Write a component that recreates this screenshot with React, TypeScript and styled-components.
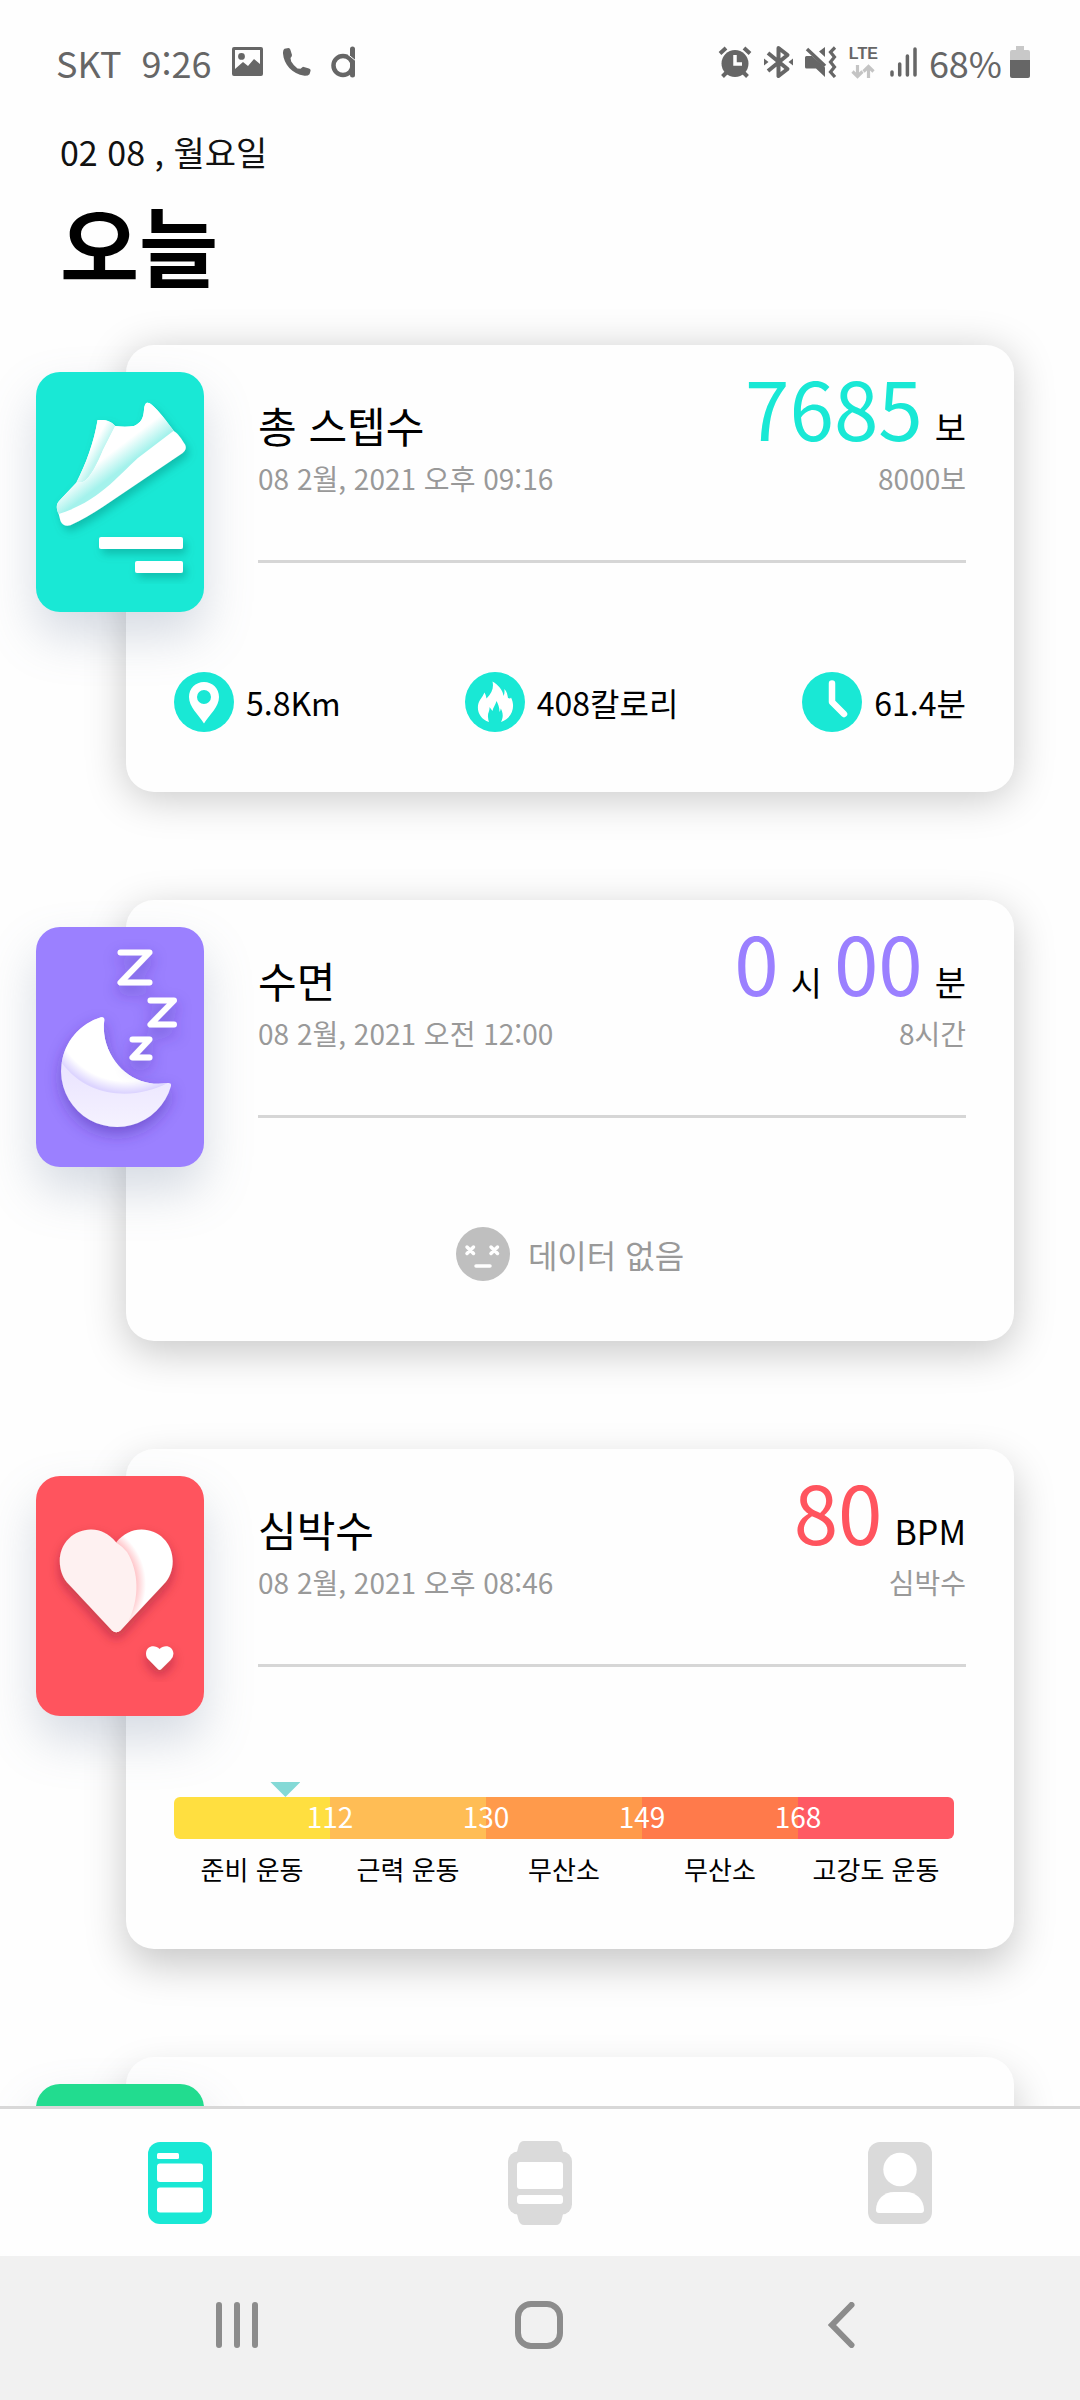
import React from 'react';
import styled, { createGlobalStyle } from 'styled-components';

const TEAL = '#19e8d5';
const PURPLE = '#9b80ff';
const RED = '#ff545e';
const GREEN = '#22dc8f';
const STATUS = '#666666';

const GlobalStyle = createGlobalStyle`
  *, *::before, *::after { box-sizing: border-box; }
  body { margin: 0; background: #fefefe; }
  h1, h2, p, ul, ol { margin: 0; padding: 0; font-weight: inherit; list-style: none; }
  button { border: 0; padding: 0; background: none; cursor: pointer; font: inherit; }
  svg { display: block; flex: none; }
`;

const Screen = styled.div`
  display: flex;
  flex-direction: column;
  height: 100vh;
  overflow: hidden;
  background: #fefefe;
  color: #000;
  font-family: 'Noto Sans CJK KR', 'Noto Sans', sans-serif;
  font-weight: 400;
`;

/* ---------- status bar ---------- */

const StatusBar = styled.header`
  display: flex;
  flex: none;
  align-items: center;
  justify-content: space-between;
  height: 126px;
  padding: 0 50px 2px 56px;
  color: ${STATUS};
  font-size: 36px;
  line-height: 50px;
`;

const StatusGroup = styled.div<{ $gap: number }>`
  display: flex;
  align-items: center;
  gap: ${(p) => p.$gap}px;
`;

const Network = styled.div`
  display: flex;
  flex-direction: column;
  align-items: center;
  gap: 2px;
  font-family: 'Liberation Sans', sans-serif;
  font-size: 16px;
  font-weight: 700;
  line-height: 16px;
`;

const StatusEnd = styled.div`
  display: flex;
  align-items: center;
  gap: 8px;
`;

/* ---------- scrolling content ---------- */

const Content = styled.main`
  flex: 1;
  min-height: 0;
  overflow: hidden auto;
  scrollbar-width: none;
`;

const PageHead = styled.div`
  padding: 0 60px;
`;

const Today = styled.p`
  color: #111;
  font-size: 34px;
  line-height: 52px;
`;

const PageTitle = styled.h1`
  margin-top: 16px;
  font-size: 86px;
  font-weight: 700;
  line-height: 100px;
`;

const CardList = styled.div`
  display: flex;
  flex-direction: column;
  gap: 108px;
  padding: 51px 66px 108px 126px;
`;

const Card = styled.section<{ $lift: number }>`
  position: relative;
  min-height: 440px;
  padding: 30px 48px 60px;
  border-radius: 28px;
  background: #fefefe;
  box-shadow: 0 ${(p) => p.$lift}px 42px rgba(0, 0, 0, 0.22);
`;

const Tile = styled.div<{ $color: string }>`
  position: absolute;
  top: 27px;
  left: -90px;
  width: 168px;
  height: 240px;
  border-radius: 24px;
  background: ${(p) => p.$color};
  box-shadow: 0 24px 48px rgba(110, 128, 158, 0.28);
`;

const CardHead = styled.div`
  display: grid;
  grid-template-columns: 1fr auto;
  grid-template-rows: 80px 105px;
  margin-left: 84px;
  border-bottom: 3px solid #d6d6d6;
`;

const CardTitle = styled.h2`
  align-self: end;
  font-size: 42px;
  line-height: 60px;
`;

const Reading = styled.p`
  display: flex;
  align-items: baseline;
  justify-content: flex-end;
  gap: 12px;
  height: 62px;
  line-height: 62px;
`;

const Figure = styled.span<{ $color: string }>`
  color: ${(p) => p.$color};
  font-size: 80px;
`;

const Unit = styled.span`
  font-size: 34px;
`;

const Caption = styled.p<{ $end?: boolean }>`
  color: #999;
  font-size: 28px;
  line-height: 46px;
  text-align: ${(p) => (p.$end ? 'right' : 'left')};
`;

const Stats = styled.ul`
  display: flex;
  justify-content: space-between;
  margin-top: 109px;
`;

const Stat = styled.li`
  display: flex;
  align-items: center;
  gap: 12px;
  font-size: 32px;
  line-height: 60px;
`;

const Empty = styled.p`
  display: flex;
  align-items: center;
  justify-content: center;
  gap: 18px;
  margin-top: 109px;
  color: #999;
  font-size: 32px;
  line-height: 54px;
`;

/* ---------- heart rate zones ---------- */

const Zones = styled.div`
  margin: 115px 12px 0 0;
`;

const MarkerTrack = styled.div`
  display: flex;
`;

const Marker = styled.div`
  width: 30px;
  height: 15px;
  background: #84d9d6;
  clip-path: polygon(0 0, 100% 0, 50% 100%);
`;

const ZoneBar = styled.ol`
  display: flex;
  overflow: hidden;
  border-radius: 6px;
`;

const Zone = styled.li<{ $color: string }>`
  flex: 1;
  height: 42px;
  background: ${(p) => p.$color};
`;

/* Each limit sits across the line between two zones. */
const Limits = styled.ol`
  display: flex;
  margin-top: -42px;
  padding: 0 10%;
  color: #fff;
  font-size: 28px;
  line-height: 38px;
`;

const Limit = styled.li`
  flex: 1;
  height: 42px;
  text-align: center;
`;

const ZoneNames = styled.ol`
  display: flex;
  margin-top: 10px;
  font-size: 26px;
  line-height: 40px;
`;

const ZoneName = styled.li`
  flex: 1;
  text-align: center;
  white-space: nowrap;
`;

/* ---------- bottom bars ---------- */

const TabBar = styled.nav`
  display: flex;
  flex: none;
  height: 150px;
  border-top: 3px solid #d8d8d8;
  background: #fefefe;
`;

const BarButton = styled.button`
  display: flex;
  flex: 1;
  align-items: center;
  justify-content: center;
`;

const SystemBar = styled.nav`
  display: flex;
  flex: none;
  height: 144px;
  padding: 0 88px 6px 86px;
  background: #f1f1f1;
`;

/* ---------- status icons ---------- */

const PictureIcon = () => (
  <svg width="31" height="30" viewBox="0 0 31 30" aria-hidden="true">
    <path
      fill={STATUS}
      fillRule="evenodd"
      d="M2 0H29Q31 0 31 2V27Q31 29 29 29H2Q0 29 0 27V2Q0 0 2 0ZM3 3V22L11 15L16 19L22 12L28 17V3ZM9.500 6a3.400 3.400 0 1 1 0 6.800a3.400 3.400 0 1 1 0-6.800Z"
    />
  </svg>
);

const PhoneIcon = () => (
  <svg width="28" height="28" viewBox="0 0 28 28" aria-hidden="true">
    <path
      fill={STATUS}
      d="M1.500.8 5.500 0Q7 0 7.300 1.500L9 7Q9 8.500 7.500 10L8.200 13.500Q10.500 17.500 14.500 20.500L17.500 20.800 20 18.800 26 20.600Q28 21.200 27.500 23L26.500 26.200Q25 28 21.500 27.800C9 26 .8 16 0 5.500Q-.2 2 1.500.8Z"
    />
  </svg>
);

const DaumIcon = () => (
  <svg width="26" height="32" viewBox="0 0 26 32" aria-hidden="true" fill="none" stroke={STATUS}>
    <circle cx="12" cy="19.500" r="9.500" strokeWidth="4.500" />
    <path d="M21.500 3V29" strokeWidth="5" strokeLinecap="round" />
    <path d="M17 8.500 25 15" stroke="#fefefe" strokeWidth="1" />
  </svg>
);

const AlarmIcon = () => (
  <svg width="34" height="32" viewBox="0 0 34 32" aria-hidden="true">
    <circle cx="17" cy="17.500" r="13.500" fill={STATUS} />
    <path
      d="M2 7.500 8 2M32 7.500 26 2M4.500 30.500 9 26M29.500 30.500 25 26"
      stroke={STATUS}
      strokeWidth="4"
    />
    <path d="M17 9V18H24" fill="none" stroke="#fefefe" strokeWidth="3.500" />
  </svg>
);

const BluetoothIcon = () => (
  <svg width="29" height="34" viewBox="0 0 29 34" aria-hidden="true">
    <path
      d="M4 8 23.500 24 14.500 31V3L23.500 10 4 26"
      fill="none"
      stroke={STATUS}
      strokeWidth="4"
      strokeLinejoin="round"
    />
    <path d="M0 13.500 4.500 17 0 20.500ZM29 13.500 24.500 17 29 20.500Z" fill={STATUS} />
  </svg>
);

const MuteIcon = () => (
  <svg width="32" height="32" viewBox="0 0 32 32" aria-hidden="true">
    <path
      d="M1.500 10H7L20 21.500V31L11 22.500H1.500Q0 22.500 0 21V11.500Q0 10 1.500 10ZM20 1V11L14 5.500Z"
      fill={STATUS}
    />
    <path d="M2 3 20 20" stroke={STATUS} strokeWidth="3.500" />
    <path
      d="M30 1.500 25.500 6 29.500 11 25.500 16 29.500 21 25.500 26 30 31"
      fill="none"
      stroke={STATUS}
      strokeWidth="3.200"
    />
  </svg>
);

const DataArrows = () => (
  <svg
    width="24"
    height="15"
    viewBox="0 0 24 15"
    aria-hidden="true"
    fill="none"
    stroke="#c4c4c4"
    strokeWidth="3.200"
  >
    <path d="M6.500 1V12M1.500 7.500 6.500 12.500 11.500 7.500M17.500 14V3M12.500 7.500 17.500 2.500 22.500 7.500" />
  </svg>
);

const SignalIcon = () => (
  <svg
    width="27"
    height="30"
    viewBox="0 0 27 30"
    aria-hidden="true"
    stroke={STATUS}
    strokeWidth="3.500"
    strokeLinecap="round"
  >
    <path d="M2 25V28M9.700 17V28M17.400 9V28M25 2V28" />
  </svg>
);

const BatteryIcon = () => (
  <svg width="20" height="32" viewBox="0 0 20 32" aria-hidden="true">
    <path d="M6 0H14V4H18Q20 4 20 6V15H0V6Q0 4 2 4H6Z" fill="#c8c8c8" />
    <path d="M0 14H20V30Q20 32 18 32H2Q0 32 0 30Z" fill={STATUS} />
  </svg>
);

/* ---------- tile artwork ---------- */

const ShoeArt = () => (
  <svg width="168" height="240" viewBox="0 0 168 240" aria-hidden="true">
    <defs>
      <linearGradient id="shoeBody" gradientUnits="userSpaceOnUse" x1="64" y1="89" x2="75.700" y2="104.500">
        <stop offset="0" stopColor="#ffffff" />
        <stop offset="1" stopColor="#a4f2ec" />
      </linearGradient>
      <linearGradient id="shoeTongue" gradientUnits="userSpaceOnUse" x1="74" y1="44" x2="83.400" y2="49.500">
        <stop offset="0" stopColor="#ffffff" />
        <stop offset="1" stopColor="#bdf5f0" />
      </linearGradient>
      <filter id="shoeShadow" x="-20%" y="-20%" width="150%" height="150%">
        <feDropShadow dx="3" dy="5" stdDeviation="4" floodColor="#067d72" floodOpacity="0.400" />
      </filter>
    </defs>
    <g filter="url(#shoeShadow)">
      <path
        fill="#fff"
        d="M22.700 142C20 136 20 132 24 128L40.300 110.700C50 92 58 70 61.600 48C70 47.500 75 49 79.200 54C86 55 92 55 98 54C105 51 107.500 46 108 38C108.500 31 111 28.500 116 33C124 40 131 50 137.700 59C143 62 146 68 149 72.500Q151.500 77.500 146.300 81.300L67 134.700Q50 146 34.400 153.300Q27 155 24.500 149Z"
      />
      <path
        fill="url(#shoeTongue)"
        d="M61.600 48C70 47.500 75 49 79.200 54L67 78C62 90 55 106 46.500 110.300L40.300 110.700C50 92 58 70 61.600 48Z"
      />
      <path
        fill="url(#shoeBody)"
        d="M79.200 54C86 55 92 55 98 54C105 51 107.500 46 108 38C108.500 31 111 28.500 116 33C124 40 131 50 137.700 58.700L101.600 86.300C82 104 62 130 22.700 142C20 136 20 132 24 128L40.300 110.700L46.500 110.300C55 106 62 90 67 78Z"
      />
    </g>
    <g fill="#fff" filter="url(#shoeShadow)">
      <rect x="63" y="165" width="84" height="12" rx="2" />
      <rect x="99" y="189" width="48" height="12" rx="2" />
    </g>
  </svg>
);

const MoonArt = () => (
  <svg width="168" height="240" viewBox="0 0 168 240" aria-hidden="true">
    <defs>
      <linearGradient id="moonLow" x1="0" y1="0.500" x2="0" y2="1">
        <stop offset="0" stopColor="#ebe5ff" />
        <stop offset="1" stopColor="#f5f2ff" />
      </linearGradient>
      <radialGradient id="moonHigh" gradientUnits="userSpaceOnUse" cx="90" cy="82" r="84">
        <stop offset="0.860" stopColor="#ffffff" />
        <stop offset="1" stopColor="#dcd4ff" />
      </radialGradient>
      <filter id="moonShadow" x="-40%" y="-30%" width="180%" height="180%">
        <feDropShadow dx="0" dy="7" stdDeviation="8" floodColor="#43249c" floodOpacity="0.450" />
      </filter>
    </defs>
    <g filter="url(#moonShadow)">
      <path
        fill="url(#moonLow)"
        d="M65 90.300A56 56 0 1 0 135 159Q135.500 155.500 131.500 156C104 161 76 143 69 112Q67 102 68.300 93Q68.300 89.500 65 90.300Z"
      />
      <path
        fill="url(#moonHigh)"
        d="M65 90.300A56 56 0 0 0 25.800 135.700C52 172 100 173 131.500 156C104 161 76 143 69 112Q67 102 68.300 93Q68.300 89.500 65 90.300Z"
      />
    </g>
    <g
      filter="url(#moonShadow)"
      fill="none"
      stroke="#fff"
      strokeWidth="6"
      strokeLinecap="round"
      strokeLinejoin="round"
    >
      <polyline points="84.500,25.500 113.500,25.500 84.500,55.500 113.500,55.500" />
      <polyline points="114.500,73.500 138,73.500 114.500,97.500 138,97.500" />
      <polyline points="96.500,112.500 113.500,112.500 96.500,130.500 113.500,130.500" />
    </g>
  </svg>
);

const HeartArt = () => (
  <svg width="168" height="240" viewBox="0 0 168 240" aria-hidden="true">
    <defs>
      <radialGradient id="heartFold" gradientUnits="userSpaceOnUse" cx="46" cy="108" r="64">
        <stop offset="0.840" stopColor="#ffc4c8" />
        <stop offset="1" stopColor="#ffffff" />
      </radialGradient>
      <filter id="heartShadow" x="-40%" y="-30%" width="180%" height="180%">
        <feDropShadow dx="0" dy="6" stdDeviation="6" floodColor="#7c1f30" floodOpacity="0.450" />
      </filter>
    </defs>
    <g filter="url(#heartShadow)">
      <path
        fill="url(#heartFold)"
        d="M80.200 66.400C87.500 58 96 53.600 105.500 53.600C123 53.600 136.700 67.500 136.700 85C136.700 94.500 133.500 102.500 127.500 108.500L84.400 154.500Q80.200 158 76 154.500Z"
      />
      <path
        fill="#fef1f1"
        d="M80.200 66.400C73 58 64.500 53.600 55 53.600C37.500 53.600 23.800 67.500 23.800 85C23.800 94.500 27 102.500 33 108.500L76 154.500Q80.200 158 84.400 154.500L92 146C104 122 103 96 91 76Q86 70 80.200 66.400Z"
      />
    </g>
    <path
      filter="url(#heartShadow)"
      fill="#fff"
      d="M123.600 173C119 168.500 110.500 169.500 110 177.500Q110 181.500 113 184L121.800 193Q123.600 195 125.400 193L134.500 184Q137.400 181.500 137.400 177.500C136.700 169.500 128.200 168.500 123.600 173Z"
    />
  </svg>
);

/* ---------- card icons ---------- */

const PinIcon = () => (
  <svg width="60" height="60" viewBox="0 0 60 60" aria-hidden="true">
    <circle cx="30" cy="30" r="30" fill={TEAL} />
    <path
      fill="#fff"
      fillRule="evenodd"
      d="M30 10C21.500 10 15 16.500 15 25C15 35 24 42 30 51.500C36 42 45 35 45 25C45 16.500 38.500 10 30 10ZM30 18a7 7 0 1 1 0 14a7 7 0 1 1 0-14Z"
    />
  </svg>
);

const FlameIcon = () => (
  <svg width="60" height="60" viewBox="0 0 60 60" aria-hidden="true">
    <circle cx="30" cy="30" r="30" fill={TEAL} />
    <path
      fill="#fff"
      d="M27.500 9.500C33 12.500 38 18.500 38.500 24Q40 21 39.300 17C42 19.500 42.500 23 43 26Q45.500 27 46 25.500C50 33 49 45 36 50C39 44 37.500 40 35.800 36.500Q35.500 38.500 34.500 40C34.500 35 33 32 31.500 29C30.500 33 28 35.500 27.500 39Q26 37 24.500 35C25 39 22.500 41 23 45Q23.200 48 24 50C13 46.500 10.500 35 15 28Q18 24 19.500 20.500Q21 23 21.500 26.500C27 21 29 15.500 27.500 9.500Z"
    />
  </svg>
);

const ClockIcon = () => (
  <svg width="60" height="60" viewBox="0 0 60 60" aria-hidden="true">
    <circle cx="30" cy="30" r="30" fill={TEAL} />
    <path
      d="M30 11.500V30L42 42"
      fill="none"
      stroke="#fff"
      strokeWidth="6.500"
      strokeLinecap="round"
      strokeLinejoin="round"
    />
  </svg>
);

const NoDataIcon = () => (
  <svg width="54" height="54" viewBox="0 0 54 54" aria-hidden="true">
    <circle cx="27" cy="27" r="27" fill="#bfbfbf" />
    <path
      d="M11 20 17.500 26.500M17.500 20 11 26.500M35 20 41.500 26.500M41.500 20 35 26.500M20 39H34"
      stroke="#fff"
      strokeWidth="3.500"
      strokeLinecap="round"
    />
  </svg>
);

/* ---------- bar icons ---------- */

const DashboardIcon = () => (
  <svg width="64" height="82" viewBox="0 0 64 82" aria-hidden="true">
    <rect width="64" height="82" rx="12" fill={TEAL} />
    <g fill="#fff">
      <rect x="9" y="11" width="22" height="6" rx="1.500" />
      <rect x="9" y="21.500" width="46" height="18.500" rx="3" />
      <rect x="9" y="45.500" width="46" height="25" rx="3" />
    </g>
  </svg>
);

const WatchIcon = () => (
  <svg width="64" height="84" viewBox="0 0 64 84" aria-hidden="true">
    <g fill="#dadada">
      <path d="M16 0H48Q52 0 53.500 5L55 11V73L53.500 79Q52 84 48 84H16Q12 84 10.500 79L9 73V11L10.500 5Q12 0 16 0Z" />
      <rect y="10.500" width="64" height="63" rx="10" />
    </g>
    <g fill="#fff">
      <rect x="9" y="21" width="46" height="27" rx="3" />
      <rect x="9" y="54" width="46" height="9" rx="3" />
    </g>
  </svg>
);

const ProfileIcon = () => (
  <svg width="64" height="82" viewBox="0 0 64 82" aria-hidden="true">
    <rect width="64" height="82" rx="12" fill="#dadada" />
    <circle cx="32" cy="27.500" r="16.700" fill="#fff" />
    <path d="M26 50H38C48 50 56 57.500 56 68Q56 71 53 71H11Q8 71 8 68C8 57.500 16 50 26 50Z" fill="#fff" />
  </svg>
);

const RecentsIcon = () => (
  <svg
    width="42"
    height="46"
    viewBox="0 0 42 46"
    aria-hidden="true"
    stroke="#8c8c8c"
    strokeWidth="6"
    strokeLinecap="round"
  >
    <path d="M3 3V43M21 3V43M39 3V43" />
  </svg>
);

const HomeIcon = () => (
  <svg width="48" height="48" viewBox="0 0 48 48" aria-hidden="true">
    <rect x="3" y="3" width="42" height="42" rx="13" fill="none" stroke="#8c8c8c" strokeWidth="6" />
  </svg>
);

const BackIcon = () => (
  <svg width="27" height="46" viewBox="0 0 27 46" aria-hidden="true">
    <path d="M23.500 3 4 23 23.500 43" fill="none" stroke="#8c8c8c" strokeWidth="6" strokeLinecap="round" />
  </svg>
);

/* ---------- data ---------- */

const stats = [
  { icon: <PinIcon />, text: '5.8Km' },
  { icon: <FlameIcon />, text: '408칼로리' },
  { icon: <ClockIcon />, text: '61.4분' },
];

const zones = [
  { color: '#ffdf40', name: '준비 운동' },
  { color: '#ffbd55', name: '근력 운동' },
  { color: '#ff9a4b', name: '무산소' },
  { color: '#ff7a4b', name: '무산소' },
  { color: '#ff5964', name: '고강도 운동' },
];

const limits = [112, 130, 149, 168];
const heartRate = 80;

/* Share of the bar that lies left of the current rate, inside the first zone. */
const markerPosition = (heartRate / limits[0]) * (100 / zones.length);

type ReadingPart = { value: string; unit: string };

type MetricCardProps = {
  title: string;
  time: string;
  goal: string;
  color: string;
  lift: number;
  art: React.ReactNode;
  readings: ReadingPart[];
  children: React.ReactNode;
};

const MetricCard = ({ title, time, goal, color, lift, art, readings, children }: MetricCardProps) => (
  <Card $lift={lift}>
    <CardHead>
      <CardTitle>{title}</CardTitle>
      <Reading>
        {readings.map((reading) => (
          <React.Fragment key={reading.unit}>
            <Figure $color={color}>{reading.value}</Figure>
            <Unit>{reading.unit}</Unit>
          </React.Fragment>
        ))}
      </Reading>
      <Caption>{time}</Caption>
      <Caption $end>{goal}</Caption>
    </CardHead>
    {children}
    <Tile $color={color}>{art}</Tile>
  </Card>
);

export default function App() {
  return (
    <Screen lang="ko">
      <GlobalStyle />
      <StatusBar>
        <StatusGroup $gap={20}>
          <span>SKT</span>
          <span>9:26</span>
          <PictureIcon />
          <PhoneIcon />
          <DaumIcon />
        </StatusGroup>
        <StatusGroup $gap={12}>
          <AlarmIcon />
          <BluetoothIcon />
          <MuteIcon />
          <Network>
            LTE
            <DataArrows />
          </Network>
          <SignalIcon />
          <StatusEnd>
            <span>68%</span>
            <BatteryIcon />
          </StatusEnd>
        </StatusGroup>
      </StatusBar>

      <Content>
        <PageHead>
          <Today>02 08 , 월요일</Today>
          <PageTitle>오늘</PageTitle>
        </PageHead>

        <CardList>
          <MetricCard
            title="총 스텝수"
            time="08 2월, 2021 오후 09:16"
            goal="8000보"
            color={TEAL}
            lift={6}
            art={<ShoeArt />}
            readings={[{ value: '7685', unit: '보' }]}
          >
            <Stats>
              {stats.map((stat) => (
                <Stat key={stat.text}>
                  {stat.icon}
                  {stat.text}
                </Stat>
              ))}
            </Stats>
          </MetricCard>

          <MetricCard
            title="수면"
            time="08 2월, 2021 오전 12:00"
            goal="8시간"
            color={PURPLE}
            lift={11}
            art={<MoonArt />}
            readings={[
              { value: '0', unit: '시' },
              { value: '00', unit: '분' },
            ]}
          >
            <Empty>
              <NoDataIcon />
              데이터 없음
            </Empty>
          </MetricCard>

          <MetricCard
            title="심박수"
            time="08 2월, 2021 오후 08:46"
            goal="심박수"
            color={RED}
            lift={16}
            art={<HeartArt />}
            readings={[{ value: String(heartRate), unit: 'BPM' }]}
          >
            <Zones>
              <MarkerTrack>
                <Marker style={{ marginLeft: `calc(${markerPosition}% - 15px)` }} />
              </MarkerTrack>
              <ZoneBar>
                {zones.map((zone) => (
                  <Zone key={zone.color} $color={zone.color} />
                ))}
              </ZoneBar>
              <Limits>
                {limits.map((limit) => (
                  <Limit key={limit}>{limit}</Limit>
                ))}
              </Limits>
              <ZoneNames>
                {zones.map((zone) => (
                  <ZoneName key={zone.color}>{zone.name}</ZoneName>
                ))}
              </ZoneNames>
            </Zones>
          </MetricCard>

          <Card $lift={20}>
            <Tile $color={GREEN} />
          </Card>
        </CardList>
      </Content>

      <TabBar aria-label="메뉴">
        <BarButton type="button" aria-label="오늘" aria-current="page">
          <DashboardIcon />
        </BarButton>
        <BarButton type="button" aria-label="기기">
          <WatchIcon />
        </BarButton>
        <BarButton type="button" aria-label="프로필">
          <ProfileIcon />
        </BarButton>
      </TabBar>

      <SystemBar aria-label="시스템">
        <BarButton type="button" aria-label="최근 앱">
          <RecentsIcon />
        </BarButton>
        <BarButton type="button" aria-label="홈">
          <HomeIcon />
        </BarButton>
        <BarButton type="button" aria-label="뒤로">
          <BackIcon />
        </BarButton>
      </SystemBar>
    </Screen>
  );
}
